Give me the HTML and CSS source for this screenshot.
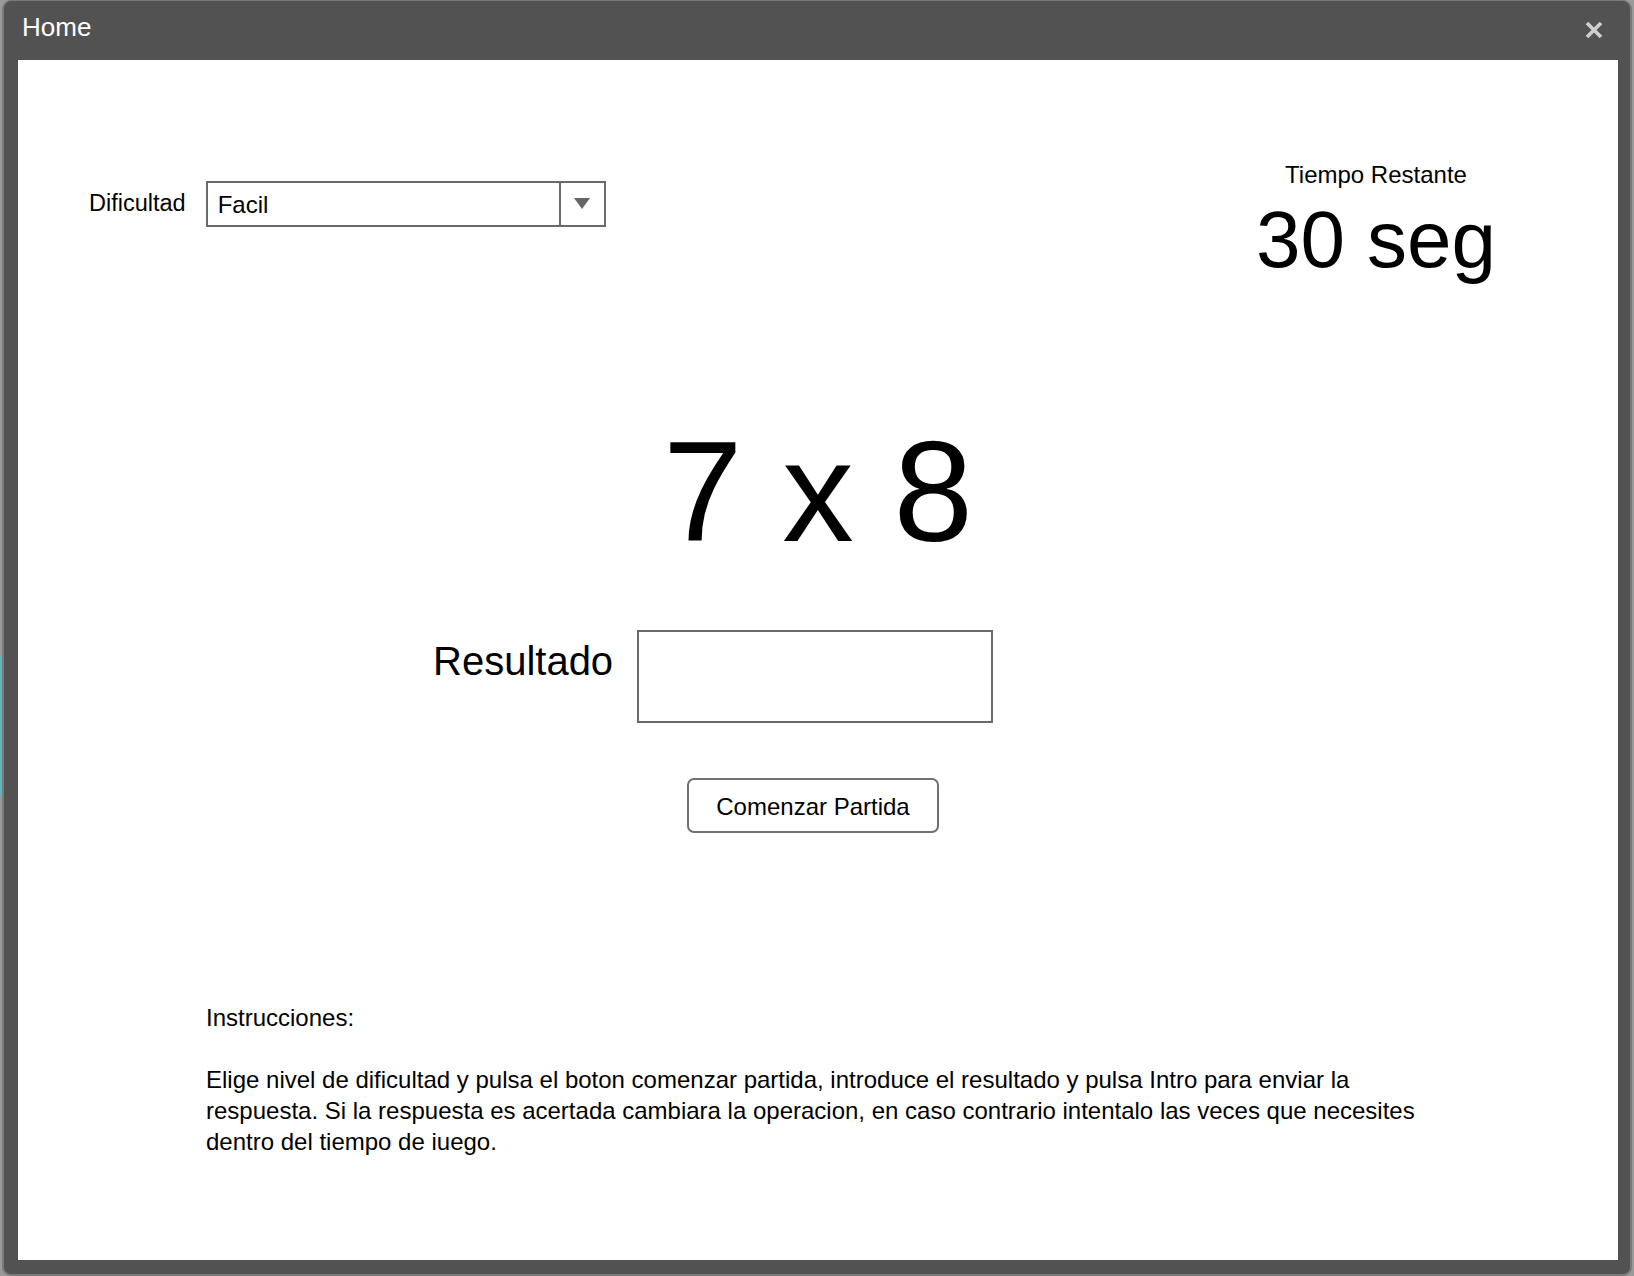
FILE: index.html
```html
<!DOCTYPE html>
<html lang="es">
<head>
<meta charset="utf-8">
<title>Home</title>
<link rel="stylesheet" href="styles.css">
</head>
<body>
<div class="edge-strip"></div>
<div class="window">
  <div class="titlebar">
    <span class="title">Home</span>
    <svg class="close" viewBox="0 0 18 18" width="18" height="18" aria-label="Cerrar">
      <path d="M2 2 L16 16 M16 2 L2 16" stroke="#cfcfcf" stroke-width="3.6" stroke-linecap="butt" fill="none"/>
    </svg>
  </div>
  <div class="content">
    <div class="top-row">
      <div class="difficulty">
        <span class="label">Dificultad</span>
        <div class="select">
          <span class="select-value">Facil</span>
          <span class="select-arrow"><span class="triangle"></span></span>
        </div>
      </div>
      <div class="timer">
        <div class="timer-label">Tiempo Restante</div>
        <div class="timer-value">30 seg</div>
      </div>
    </div>
    <div class="operation">7 x 8</div>
    <div class="result-row">
      <span class="result-label">Resultado</span>
      <div class="result-box"></div>
    </div>
    <button class="start-btn">Comenzar Partida</button>
    <div class="instructions">
      <p class="instr-title">Instrucciones:</p>
      <p class="instr-text">Elige nivel de dificultad y pulsa el boton comenzar partida, introduce el resultado y pulsa Intro para enviar la respuesta. Si la respuesta es acertada cambiara la operacion, en caso contrario intentalo las veces que necesites dentro del tiempo de iuego.</p>
    </div>
  </div>
</div>
</body>
</html>
```

FILE: styles.css
```css
html, body {
  margin: 0;
  padding: 0;
}
body {
  background: #9a9a9a;
  font-family: "Liberation Sans", Arial, Helvetica, sans-serif;
  color: #000;
  width: 1634px;
  height: 1276px;
  overflow: hidden;
  position: relative;
}
.edge-strip {
  position: absolute;
  left: 0;
  top: 656px;
  width: 2px;
  height: 140px;
  background: #5db7c3;
}
.window {
  margin-left: 2px;
  width: 1630px;
  height: 1276px;
  box-sizing: border-box;
  background: #525252;
  border: 2px solid #7a7a7a;
  border-top-width: 1px;
  border-radius: 9px;
  padding: 0 12px 14px 14px;
  display: flex;
  flex-direction: column;
}
.titlebar {
  height: 59px;
  flex: none;
  display: flex;
  justify-content: space-between;
  align-items: flex-start;
  margin: 0 -12px 0 -14px;
  padding: 0 27px 0 18px;
}
.title {
  color: #fff;
  font-size: 26px;
  line-height: 30px;
  margin-top: 11px;
}
.close {
  margin-top: 20px;
  display: block;
}
.content {
  background: #fff;
  width: 1600px;
  height: 1200px;
  flex: none;
}
.top-row {
  display: flex;
  justify-content: space-between;
  align-items: flex-start;
  padding: 101px 112px 0 71px;
}
.difficulty {
  display: flex;
  align-items: center;
  gap: 20px;
  margin-top: 20px;
}
.label {
  font-size: 23.5px;
  line-height: 1.15;
}
.select {
  width: 400px;
  height: 46px;
  box-sizing: border-box;
  border: 2px solid #6a6a6a;
  display: flex;
  align-items: stretch;
}
.select-value {
  flex: 1;
  font-size: 24px;
  line-height: 43px;
  padding-left: 10px;
}
.select-arrow {
  width: 43px;
  border-left: 2px solid #6a6a6a;
  display: flex;
  align-items: center;
  justify-content: center;
}
.triangle {
  width: 0;
  height: 0;
  border-left: 8px solid transparent;
  border-right: 8px solid transparent;
  border-top: 11px solid #666;
  margin-top: -2px;
}
.timer {
  width: 260px;
  text-align: center;
}
.timer-label {
  font-size: 24px;
  line-height: 1.15;
}
.timer-value {
  font-size: 80px;
  line-height: 1.15;
  margin-top: 5px;
}
.operation {
  margin-top: 124px;
  text-align: center;
  font-size: 143px;
  line-height: 1.15;
}
.result-row {
  margin-top: 56px;
  display: flex;
  align-items: flex-start;
  padding-left: 415px;
}
.result-label {
  font-size: 40px;
  line-height: 46px;
  margin-top: 8px;
  width: 204px;
}
.result-box {
  width: 356px;
  height: 93px;
  box-sizing: border-box;
  border: 2px solid #6a6a6a;
}
.start-btn {
  display: block;
  margin: 55px 0 0 669px;
  width: 252px;
  height: 55px;
  box-sizing: border-box;
  border: 2px solid #707070;
  border-radius: 7px;
  background: #fff;
  font-family: "Liberation Sans", Arial, Helvetica, sans-serif;
  font-size: 24px;
  color: #000;
  padding: 3px 0 0 0;
}
.instructions {
  margin-top: 169px;
  padding: 0 184px 0 188px;
  font-size: 24px;
  line-height: 31px;
}
.instructions p {
  margin: 0;
}
.instr-text {
  margin-top: 31px !important;
}
```
